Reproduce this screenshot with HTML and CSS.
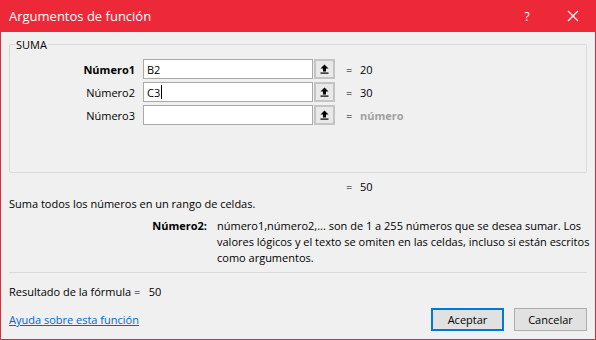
FILE: index.html
```html
<!DOCTYPE html>
<html lang="es">
<head>
    <meta charset="UTF-8">
    <title>Argumentos de función</title>
<link rel="stylesheet" href="styles.css">
</head>
<body>
    <div class="ventana">
        <div class="titulo">
            <span class="titulo-texto">Argumentos de función</span>
            <span class="ayuda">?</span>
            <span class="cerrar">
                <svg width="12" height="12" viewBox="0 0 12 12"><path d="M1 1 L11 11 M11 1 L1 11" stroke="#fff" stroke-width="1.2"/></svg>
            </span>
        </div>
        <div class="contenido">
            <fieldset class="grupo">
                <legend>SUMA</legend>
                <div class="fila">
                    <label class="etiqueta negrita">Número1</label>
                    <div class="caja"><span class="valor">B2</span></div>
                    <button class="flecha"><svg width="9" height="10" viewBox="0 0 9 10"><path d="M4.5 0.5 L8.5 4.5 L6 4.5 L6 7.5 L3 7.5 L3 4.5 L0.5 4.5 Z" fill="#000"/><rect x="0.5" y="8.5" width="8" height="1.2" fill="#000"/></svg></button>
                    <span class="igual">=</span>
                    <span class="resultado">20</span>
                </div>
                <div class="fila">
                    <label class="etiqueta">Número2</label>
                    <div class="caja"><span class="valor">C3</span><span class="cursor"></span></div>
                    <button class="flecha"><svg width="9" height="10" viewBox="0 0 9 10"><path d="M4.5 0.5 L8.5 4.5 L6 4.5 L6 7.5 L3 7.5 L3 4.5 L0.5 4.5 Z" fill="#000"/><rect x="0.5" y="8.5" width="8" height="1.2" fill="#000"/></svg></button>
                    <span class="igual">=</span>
                    <span class="resultado">30</span>
                </div>
                <div class="fila">
                    <label class="etiqueta">Número3</label>
                    <div class="caja"></div>
                    <button class="flecha"><svg width="9" height="10" viewBox="0 0 9 10"><path d="M4.5 0.5 L8.5 4.5 L6 4.5 L6 7.5 L3 7.5 L3 4.5 L0.5 4.5 Z" fill="#000"/><rect x="0.5" y="8.5" width="8" height="1.2" fill="#000"/></svg></button>
                    <span class="igual">=</span>
                    <span class="resultado gris">número</span>
                </div>
            </fieldset>
            <div class="total"><span class="igual">=</span><span class="resultado">50</span></div>
            <p class="descripcion">Suma todos los números en un rango de celdas.</p>
            <div class="detalle">
                <span class="detalle-nombre">Número2:</span>
                <span class="detalle-texto">número1,número2,... son de 1 a 255 números que se desea sumar. Los valores lógicos y el texto se omiten en las celdas, incluso si están escritos como argumentos.</span>
            </div>
            <div class="separador"></div>
            <p class="formula">Resultado de la fórmula =&nbsp;&nbsp;&nbsp;50</p>
            <div class="pie">
                <a class="enlace" href="#">Ayuda sobre esta función</a>
                <div class="botones">
                    <button class="boton principal">Aceptar</button>
                    <button class="boton">Cancelar</button>
                </div>
            </div>
        </div>
    </div>
</body>
</html>
```

FILE: styles.css
```css
*{
    padding: 0;
    margin: 0;
    box-sizing: border-box;
}
body{
    font-family: "Open Sans", "Noto Sans", sans-serif;
    font-size: 11px;
    color: #000;
    background: #f0f0f0;
}
.ventana{
    width: 596px;
    height: 340px;
    border: 1px solid #e52b3b;
    border-top: none;
    background: #f0f0f0;
}
.titulo{
    height: 32px;
    background: #ed2939;
    color: #fff;
    display: flex;
    align-items: center;
    padding-left: 9px;
    margin: 0 -1px;
}
.titulo-texto{
    font-size: 13px;
    flex: 1;
}
.ayuda{
    font-size: 12px;
    width: 46px;
    text-align: center;
}
.cerrar{
    width: 46px;
    display: flex;
    justify-content: center;
}
.contenido{
    padding: 0 8px;
}
.grupo{
    margin-top: 5px;
    border: 1px solid #dadada;
    border-radius: 2px;
    padding: 7px 0 0 0;
    height: 136px;
}
.grupo legend{
    margin-left: 5px;
    padding: 0 1px;
    font-size: 11px;
}
.fila{
    display: flex;
    align-items: center;
    height: 20px;
    margin-bottom: 3px;
}
.etiqueta{
    width: 125px;
    text-align: right;
    margin-right: 8px;
}
.negrita{
    font-weight: bold;
}
.caja{
    width: 170px;
    height: 20px;
    background: #fff;
    border: 1px solid #a9a9a9;
    display: flex;
    align-items: center;
    padding-left: 3px;
}
.cursor{
    width: 1px;
    height: 14px;
    background: #000;
    margin-left: 1px;
}
.flecha{
    width: 21px;
    height: 20px;
    margin-left: 1px;
    background: #e9e9e9;
    border: 2px solid #c4c4c4;
    display: flex;
    align-items: center;
    justify-content: center;
}
.igual{
    margin-left: 11px;
    width: 14px;
}
.gris{
    color: #a0a0a0;
    font-weight: bold;
}
.total{
    display: flex;
    padding-left: 326px;
    height: 16px;
    margin-top: 6px;
}
.descripcion{
    margin-top: 1px;
    height: 16px;
}
.detalle{
    display: flex;
    margin-top: 6px;
    line-height: 16px;
}
.detalle-nombre{
    width: 198px;
    text-align: right;
    font-weight: bold;
    flex-shrink: 0;
}
.detalle-texto{
    margin-left: 10px;
    width: 378px;
    flex-shrink: 0;
}
.separador{
    height: 1px;
    background: #dadada;
    margin-top: 6px;
}
.formula{
    margin-top: 11px;
    height: 16px;
}
.pie{
    display: flex;
    align-items: center;
    justify-content: space-between;
    margin-top: 8px;
}
.enlace{
    color: #0066cc;
    text-decoration: underline;
}
.botones{
    display: flex;
    gap: 10px;
}
.boton{
    width: 73px;
    height: 23px;
    background: #e1e1e1;
    border: 1px solid #adadad;
    font-family: "Open Sans", "Noto Sans", sans-serif;
    font-size: 11px;
}
.principal{
    border: 2px solid #0078d7;
}
```
